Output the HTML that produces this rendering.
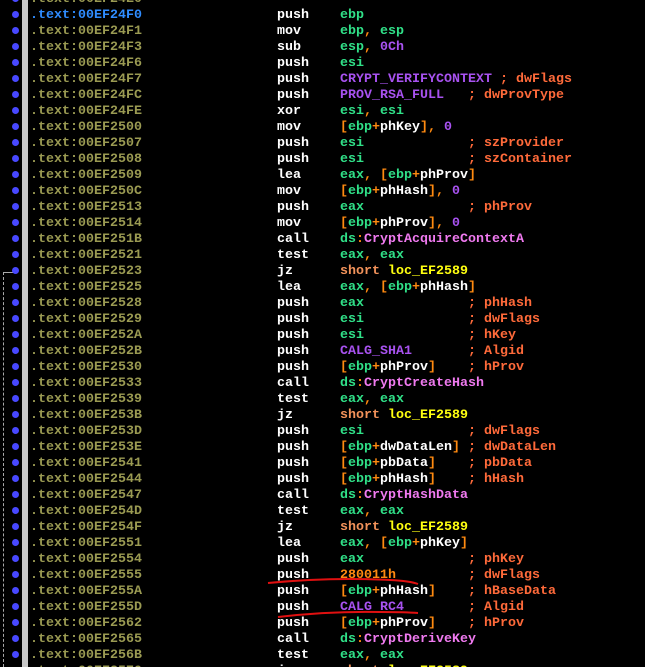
<!DOCTYPE html>
<html><head><meta charset="utf-8"><style>
html,body{margin:0;padding:0;background:#000;width:645px;height:667px;overflow:hidden;position:relative}
.ln{position:absolute;left:0;height:16px;width:645px;font:bold 13.33px/16px "Liberation Mono",monospace;white-space:pre;color:#fff}
.ln span.col{position:absolute;top:0}
.a{color:#9a9a52}.h{color:#2f8cff}
.r{color:#30e088}.c{color:#a852f0}.k{color:#ff6a3a}.b{color:#ff8a10}.w{color:#fff}
.p{color:#f07af0}.s{color:#f2925a}.l{color:#ffff10}.n{color:#ff8a10}
.dot{position:absolute;left:12px;width:7px;height:7px;border-radius:50%;background:#4848ff}
#bar{position:absolute;left:22px;top:0;width:6px;height:667px;background:#c8c8c8}
</style></head><body>
<div id="bar"></div>
<div style="position:absolute;left:3px;top:272px;width:11px;height:0;border-top:1px solid #aaa"></div>
<div style="position:absolute;left:3px;top:272px;width:0;height:400px;border-left:1px dashed #aaa"></div>
<div id="lines"></div>
<svg width="645" height="667" style="position:absolute;left:0;top:0">
<path d="M268 583 Q330 577 390 580 Q410 581 418 584" stroke="#e01010" stroke-width="2" fill="none"/>
<path d="M278 617 Q330 611 380 612 Q405 612 418 613" stroke="#e01010" stroke-width="2" fill="none"/>
</svg>
<script>
var L=[
["24E0","",""],
["24F0","push",'<span class="r">ebp</span>'],
["24F1","mov",'<span class="r">ebp</span><span class="b">, </span><span class="r">esp</span>'],
["24F3","sub",'<span class="r">esp</span><span class="b">, </span><span class="c">0Ch</span>'],
["24F6","push",'<span class="r">esi</span>'],
["24F7","push",'<span class="c">CRYPT_VERIFYCONTEXT</span> <span class="k">; dwFlags</span>'],
["24FC","push",'<span class="c">PROV_RSA_FULL</span>   <span class="k">; dwProvType</span>'],
["24FE","xor",'<span class="r">esi</span><span class="b">, </span><span class="r">esi</span>'],
["2500","mov",'B(phKey)<span class="b">, </span><span class="c">0</span>'],
["2507","push",'R(esi)<span class="k">; szProvider</span>'],
["2508","push",'R(esi)<span class="k">; szContainer</span>'],
["2509","lea",'<span class="r">eax</span><span class="b">, </span>B(phProv)'],
["250C","mov",'B(phHash)<span class="b">, </span><span class="c">0</span>'],
["2513","push",'R(eax)<span class="k">; phProv</span>'],
["2514","mov",'B(phProv)<span class="b">, </span><span class="c">0</span>'],
["251B","call",'<span class="r">ds</span><span class="b">:</span><span class="p">CryptAcquireContextA</span>'],
["2521","test",'<span class="r">eax</span><span class="b">, </span><span class="r">eax</span>'],
["2523","jz",'<span class="s">short</span> <span class="l">loc_EF2589</span>'],
["2525","lea",'<span class="r">eax</span><span class="b">, </span>B(phHash)'],
["2528","push",'R(eax)<span class="k">; phHash</span>'],
["2529","push",'R(esi)<span class="k">; dwFlags</span>'],
["252A","push",'R(esi)<span class="k">; hKey</span>'],
["252B","push",'<span class="c">CALG_SHA1</span>       <span class="k">; Algid</span>'],
["2530","push",'B(phProv)    <span class="k">; hProv</span>'],
["2533","call",'<span class="r">ds</span><span class="b">:</span><span class="p">CryptCreateHash</span>'],
["2539","test",'<span class="r">eax</span><span class="b">, </span><span class="r">eax</span>'],
["253B","jz",'<span class="s">short</span> <span class="l">loc_EF2589</span>'],
["253D","push",'R(esi)<span class="k">; dwFlags</span>'],
["253E","push",'B(dwDataLen) <span class="k">; dwDataLen</span>'],
["2541","push",'B(pbData)    <span class="k">; pbData</span>'],
["2544","push",'B(phHash)    <span class="k">; hHash</span>'],
["2547","call",'<span class="r">ds</span><span class="b">:</span><span class="p">CryptHashData</span>'],
["254D","test",'<span class="r">eax</span><span class="b">, </span><span class="r">eax</span>'],
["254F","jz",'<span class="s">short</span> <span class="l">loc_EF2589</span>'],
["2551","lea",'<span class="r">eax</span><span class="b">, </span>B(phKey)'],
["2554","push",'R(eax)<span class="k">; phKey</span>'],
["2555","push",'<span class="n">280011h</span>         <span class="k">; dwFlags</span>'],
["255A","push",'B(phHash)    <span class="k">; hBaseData</span>'],
["255D","push",'<span class="c">CALG_RC4</span>        <span class="k">; Algid</span>'],
["2562","push",'B(phProv)    <span class="k">; hProv</span>'],
["2565","call",'<span class="r">ds</span><span class="b">:</span><span class="p">CryptDeriveKey</span>'],
["256B","test",'<span class="r">eax</span><span class="b">, </span><span class="r">eax</span>'],
["2570","jz",'<span class="s">short</span> <span class="l">loc_EF2589</span>']
];
function fx(s){
 s=s.replace(/B\((\w+)\)/g,'<span class="b">[</span><span class="r">ebp</span><span class="b">+</span><span class="w">$1</span><span class="b">]</span>');
 s=s.replace(/R\((\w+)\)/g,'<span class="r">$1</span>             ');
 return s;}
var h='';
for(var i=0;i<L.length;i++){
 var y=-10+16*i;
 h+='<div class="ln" style="top:'+(y+2)+'px"><span class="col '+(i==1?'h':'a')+'" style="left:30px">.text:00EF'+L[i][0]+'</span>'+
 '<span class="col" style="left:277px">'+L[i][1]+'</span><span class="col" style="left:340px">'+fx(L[i][2])+'</span></div>';
 h+='<div class="dot" style="top:'+(y+5)+'px"></div>';
}
document.getElementById('lines').innerHTML=h;
</script>
</body></html>
